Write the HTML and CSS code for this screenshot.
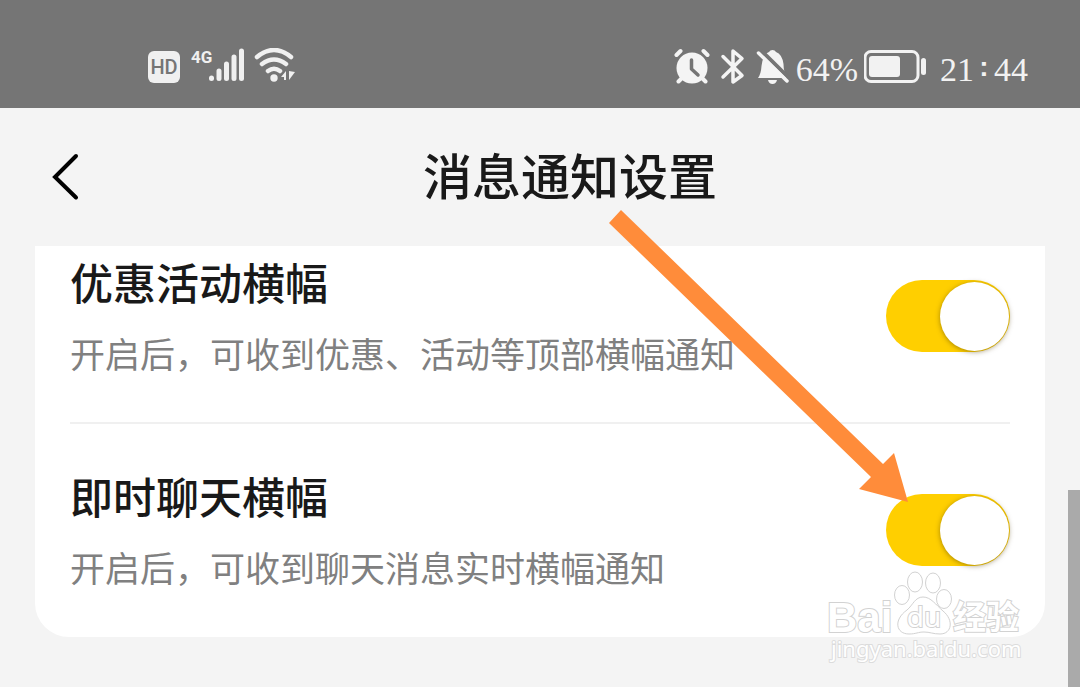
FILE: index.html
```html
<!DOCTYPE html>
<html lang="zh-CN">
<head>
<meta charset="utf-8">
<meta name="viewport" content="width=device-width, initial-scale=1">
<title>消息通知设置</title>
<link rel="stylesheet" href="styles.css">
</head>
<body>
<div class="screen">
  <div class="status">
    <div class="status-left">
      <svg class="icon" width="150" height="40" viewBox="0 0 150 40" role="img" aria-label="HD 4G">
        <rect x="0" y="3" width="32" height="32" rx="6" fill="#f0f0f0"/>
        <text class="hd" x="16" y="26" text-anchor="middle">HD</text>
        <text class="net" x="43" y="15">4G</text>
        <g stroke="#f0f0f0" stroke-width="5" stroke-linecap="round">
          <path d="M63.500 30v0.500M71 23v7.500M78.500 16v14.500M86 9v21.500M93.500 3v27.500"/>
        </g>
        <g fill="none" stroke="#f0f0f0" stroke-width="4.500" stroke-linecap="round">
          <path d="M109 9q17-14 34 0M114 16q12-9 24 0M120 23q6-4.500 12 0"/>
        </g>
        <circle cx="126" cy="30" r="3.700" fill="#f0f0f0"/>
        <path d="M133 29l5-6v9h-2v-3zM141 23v9l6-8z" fill="#f0f0f0"/>
      </svg>
    </div>
    <div class="status-right">
      <svg class="icon" width="116" height="40" viewBox="0 0 116 40" aria-hidden="true">
        <circle cx="18" cy="20" r="15.500" fill="#f4f4f4"/>
        <path d="M2.500 7l4-4M29.500 3l4 4M8 30l-3.500 3.500M28 30l3.500 3.500" stroke="#f4f4f4" stroke-width="4" stroke-linecap="round"/>
        <path d="M17.500 12v9l6.500 6" fill="none" stroke="#757575" stroke-width="3.500" stroke-linecap="round" stroke-linejoin="round"/>
        <path d="M49 8.500L68 27.500 59 34V3l9 7.500L49 29" fill="none" stroke="#f4f4f4" stroke-width="3.500" stroke-linecap="round" stroke-linejoin="round"/>
        <path d="M84 30q3-4 3.500-12Q89 6 95 4q1-2 3.500-2t3.500 2q6 2 7.500 12 0 9 4 14z" fill="#f4f4f4"/>
        <path d="M87.500 3L116 31" stroke="#757575" stroke-width="4"/>
        <path d="M84.500 5L113 33" stroke="#f4f4f4" stroke-width="3.500" stroke-linecap="round"/>
        <path d="M94 32h9q-1 4-4.500 4T94 32z" fill="#f4f4f4"/>
      </svg>
      <span class="percent">64%</span>
      <svg class="icon" width="64" height="40" viewBox="0 0 64 40" role="img" aria-label="电量">
        <rect x="1" y="3.500" width="53" height="30" rx="6" fill="none" stroke="#f2f2f2" stroke-width="3"/>
        <rect x="5" y="8" width="31" height="21" rx="3" fill="#f2f2f2"/>
        <rect x="57" y="10" width="5" height="17" rx="2.500" fill="#f2f2f2"/>
      </svg>
      <span class="time"><span>21</span><span class="colon">:</span><span>44</span></span>
    </div>
  </div>

  <header class="header">
    <button class="back" type="button" aria-label="返回">
      <svg width="30" height="50" viewBox="0 0 30 50" aria-hidden="true"><path d="M26 4L5 25 26 45.500" fill="none" stroke="#000" stroke-width="4" stroke-linecap="round"/></svg>
    </button>
    <h1 class="title">消息通知设置</h1>
  </header>

  <main class="card">
    <section class="row row-first">
      <div class="copy">
        <label class="name" for="promo">优惠活动横幅</label>
        <p class="desc" id="promo-desc">开启后，可收到优惠、活动等顶部横幅通知</p>
      </div>
      <input class="switch" id="promo" type="checkbox" role="switch" aria-describedby="promo-desc" checked>
    </section>
    <section class="row">
      <div class="copy">
        <label class="name" for="chat">即时聊天横幅</label>
        <p class="desc" id="chat-desc">开启后，可收到聊天消息实时横幅通知</p>
      </div>
      <input class="switch" id="chat" type="checkbox" role="switch" aria-describedby="chat-desc" checked>
    </section>
  </main>

  <svg class="arrow" width="300" height="294" viewBox="0 0 300 294" aria-hidden="true">
    <path d="M0 14L12 1 274 255 285 244 299 293 250 280 262 268z" fill="#ff8c3a"/>
  </svg>

  <svg class="watermark" width="200" height="100" viewBox="0 0 200 100" role="img" aria-label="Baidu 经验">
    <g class="mark">
      <text class="mark-bai" x="1" y="62">Bai</text>
      <ellipse cx="76" cy="25" rx="7.500" ry="9.500"/>
      <ellipse cx="89" cy="12" rx="7.500" ry="10"/>
      <ellipse cx="107" cy="13" rx="7.500" ry="10"/>
      <ellipse cx="118" cy="29" rx="7.500" ry="9.500"/>
      <path d="M97 27c-8 0-10 8-16 13-14 10-11 24 2 24 7 0 9-2 15-2s9 2 16 2c12 0 14-14 3-23-7-6-12-14-20-14z"/>
      <text class="mark-du" x="98" y="57" text-anchor="middle">du</text>
      <text class="mark-cn" x="127" y="59">经验</text>
      <text class="mark-url" x="5" y="87">jingyan.baidu.com</text>
    </g>
  </svg>
  <div class="scrollbar"></div>
</div>
</body>
</html>
```

FILE: styles.css
```css
* {
  box-sizing: border-box;
}

body {
  margin: 0;
  background: #f4f4f4;
  color: #191919;
  font-family: "Noto Sans CJK SC", sans-serif;
}

.screen {
  position: relative;
  min-height: 100vh;
  overflow: hidden;
}

.status {
  display: flex;
  justify-content: space-between;
  height: 108px;
  padding: 48px 52px 0 148px;
  background: #757575;
  color: #f2f2f2;
}

.status-left,
.status-right {
  display: flex;
  height: 40px;
}

.status-right {
  gap: 6px;
}

.icon {
  display: block;
  flex: none;
}

.hd {
  fill: #757575;
  font: 500 20px Roboto, sans-serif;
}

.net {
  fill: #f0f0f0;
  font: bold 17px Roboto, sans-serif;
}

.percent,
.time {
  font-family: "Liberation Serif", serif;
  font-size: 34px;
  line-height: 44px;
}

.time {
  display: flex;
  margin-left: 6px;
}

.colon {
  width: 20px;
  font-family: "Liberation Sans", sans-serif;
  font-weight: bold;
  font-size: 28px;
  line-height: 38px;
  text-align: center;
}

.header {
  display: flex;
  align-items: center;
  height: 138px;
}

.back {
  display: flex;
  justify-content: flex-end;
  width: 80px;
  margin-right: -20px;
  padding: 0;
  border: 0;
  background: none;
  cursor: pointer;
}

.title {
  flex: 1;
  margin: 0;
  padding-bottom: 6px;
  font-size: 49px;
  font-weight: 500;
  line-height: 72px;
  text-align: center;
}

.card {
  margin: 0 35px;
  padding: 0 35px;
  border-radius: 0 0 34px 34px;
  background: #fff;
}

.row {
  display: flex;
  align-items: center;
  justify-content: space-between;
  padding: 44px 0 45px;
}

.row-first {
  padding: 8px 0 44px;
  border-bottom: 2px solid #f0f0f0;
}

.copy {
  flex: 1;
  min-width: 0;
}

.name {
  display: block;
  font-size: 43px;
  font-weight: 500;
  line-height: 54px;
}

.desc {
  margin: 20px 0 0;
  color: #808080;
  font-size: 35px;
  line-height: 50px;
}

.switch {
  flex: none;
  display: flex;
  align-items: center;
  justify-content: flex-end;
  width: 124px;
  height: 72px;
  margin: 0;
  padding: 1px;
  border-radius: 36px;
  background: #ffcf00;
  appearance: none;
  cursor: pointer;
}

.switch::before {
  content: "";
  width: 69px;
  height: 69px;
  border-radius: 50%;
  background: #fff;
  box-shadow: 0 1px 5px rgba(80, 60, 0, 0.5);
}

.switch:not(:checked) {
  justify-content: flex-start;
  background: #ddd;
}

.arrow {
  position: absolute;
  top: 209px;
  left: 609px;
  pointer-events: none;
}

.watermark {
  position: absolute;
  top: 570px;
  right: 54px;
  pointer-events: none;
}

.mark {
  fill: #fff;
  stroke: #d2d2d2;
  stroke-width: 1;
}

.mark text {
  paint-order: stroke;
  stroke-width: 2px;
}

.mark .mark-bai {
  font: bold 42px "Liberation Sans", sans-serif;
}

.mark .mark-du {
  font: 28px "Noto Sans", sans-serif;
}

.mark .mark-cn {
  font: bold 33px "Noto Sans CJK SC", sans-serif;
}

.mark .mark-url {
  stroke: #dcdcdc;
  font: 22px "Noto Sans", sans-serif;
}

.scrollbar {
  position: absolute;
  top: 490px;
  right: 0;
  bottom: 0;
  width: 12px;
  background: #aaa;
}
```
